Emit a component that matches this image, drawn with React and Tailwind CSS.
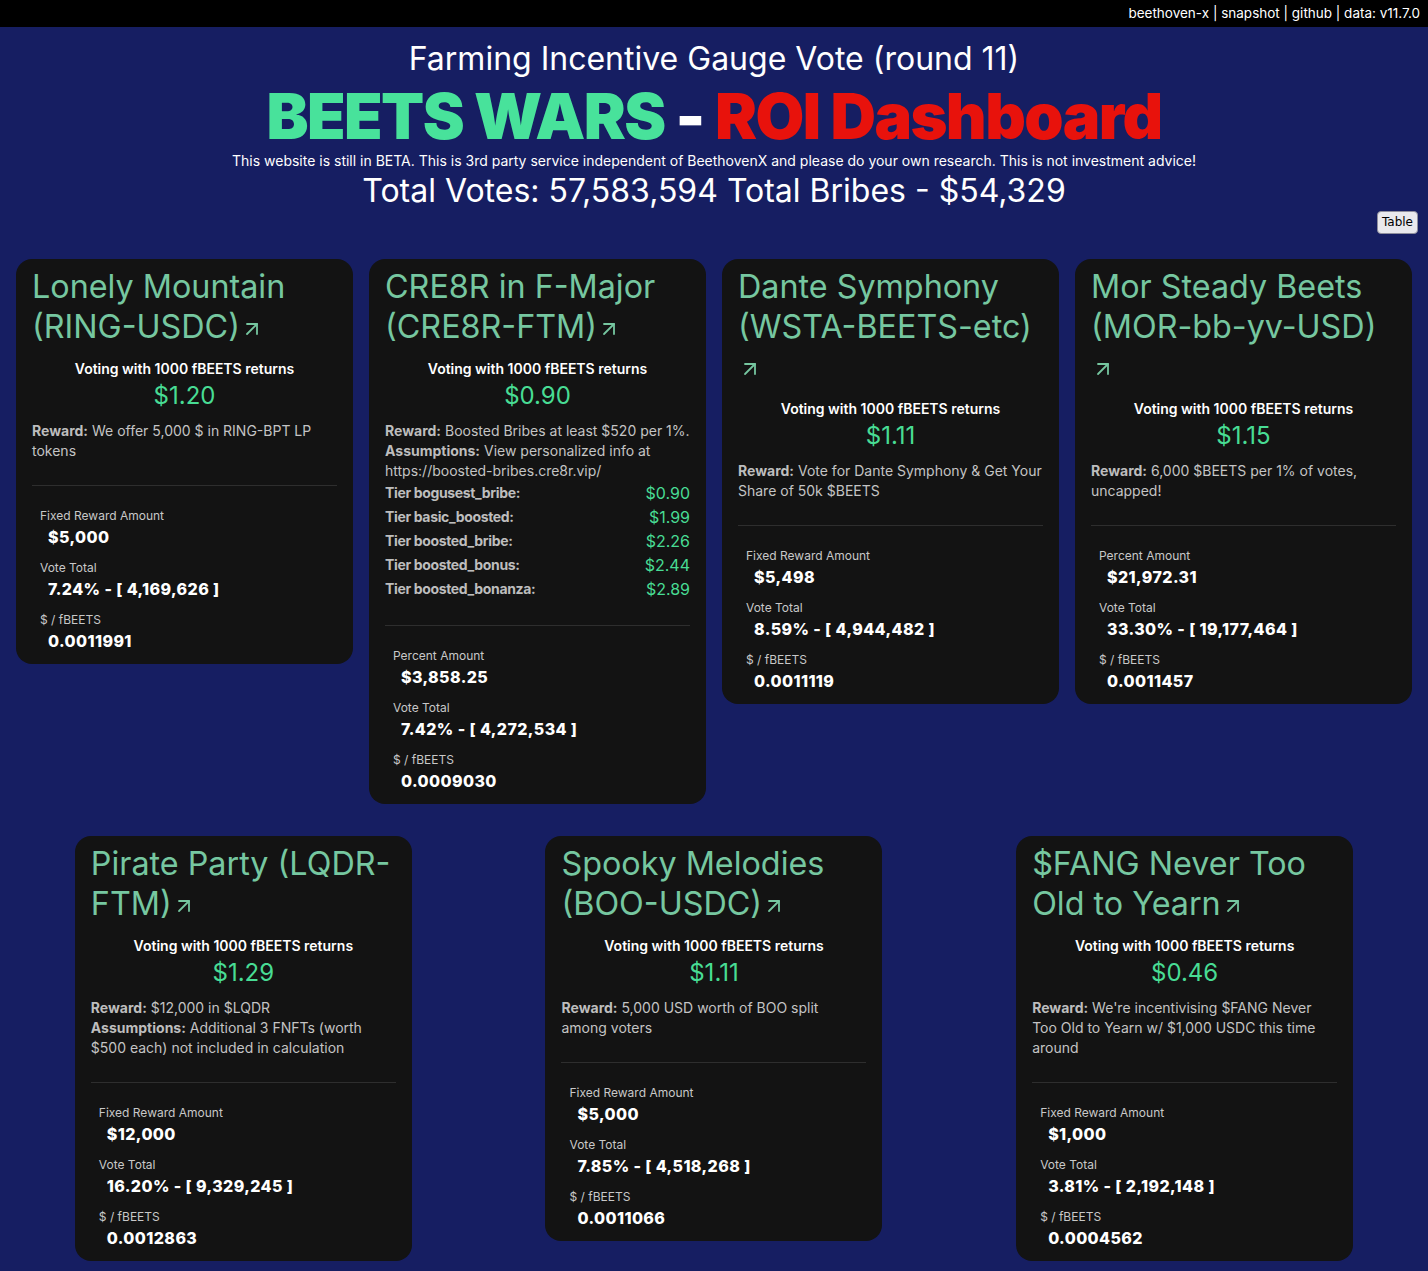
import React from 'react';
import { ArrowUpRight } from 'lucide-react';

const gauges = [
    {
        name: 'Lonely Mountain (RING-USDC)',
        returns: '$1.20',
        lines: [{ label: 'Reward:', text: 'We offer 5,000 $ in RING-BPT LP tokens' }],
        stats: [
            ['Fixed Reward Amount', '$5,000'],
            ['Vote Total', '7.24% - [ 4,169,626 ]'],
            ['$ / fBEETS', '0.0011991'],
        ],
    },
    {
        name: 'CRE8R in F-Major (CRE8R-FTM)',
        returns: '$0.90',
        lines: [
            { label: 'Reward:', text: 'Boosted Bribes at least $520 per 1%.' },
            { label: 'Assumptions:', text: 'View personalized info at https://boosted-bribes.cre8r.vip/' },
        ],
        tiers: [
            ['bogusest_bribe', '$0.90'],
            ['basic_boosted', '$1.99'],
            ['boosted_bribe', '$2.26'],
            ['boosted_bonus', '$2.44'],
            ['boosted_bonanza', '$2.89'],
        ],
        stats: [
            ['Percent Amount', '$3,858.25'],
            ['Vote Total', '7.42% - [ 4,272,534 ]'],
            ['$ / fBEETS', '0.0009030'],
        ],
    },
    {
        name: 'Dante Symphony (WSTA-BEETS-etc)',
        returns: '$1.11',
        lines: [{ label: 'Reward:', text: 'Vote for Dante Symphony & Get Your Share of 50k $BEETS' }],
        stats: [
            ['Fixed Reward Amount', '$5,498'],
            ['Vote Total', '8.59% - [ 4,944,482 ]'],
            ['$ / fBEETS', '0.0011119'],
        ],
    },
    {
        name: 'Mor Steady Beets (MOR-bb-yv-USD)',
        returns: '$1.15',
        lines: [{ label: 'Reward:', text: '6,000 $BEETS per 1% of votes, uncapped!' }],
        stats: [
            ['Percent Amount', '$21,972.31'],
            ['Vote Total', '33.30% - [ 19,177,464 ]'],
            ['$ / fBEETS', '0.0011457'],
        ],
    },
    {
        name: 'Pirate Party (LQDR-FTM)',
        returns: '$1.29',
        lines: [
            { label: 'Reward:', text: '$12,000 in $LQDR' },
            { label: 'Assumptions:', text: 'Additional 3 FNFTs (worth $500 each) not included in calculation' },
        ],
        stats: [
            ['Fixed Reward Amount', '$12,000'],
            ['Vote Total', '16.20% - [ 9,329,245 ]'],
            ['$ / fBEETS', '0.0012863'],
        ],
    },
    {
        name: 'Spooky Melodies (BOO-USDC)',
        returns: '$1.11',
        lines: [{ label: 'Reward:', text: '5,000 USD worth of BOO split among voters' }],
        stats: [
            ['Fixed Reward Amount', '$5,000'],
            ['Vote Total', '7.85% - [ 4,518,268 ]'],
            ['$ / fBEETS', '0.0011066'],
        ],
    },
    {
        name: '$FANG Never Too Old to Yearn',
        returns: '$0.46',
        lines: [{ label: 'Reward:', text: "We're incentivising $FANG Never Too Old to Yearn w/ $1,000 USDC this time around" }],
        stats: [
            ['Fixed Reward Amount', '$1,000'],
            ['Vote Total', '3.81% - [ 2,192,148 ]'],
            ['$ / fBEETS', '0.0004562'],
        ],
    },
];

const GaugeCard = ({ gauge }) => (
    <div className="w-[337px] mx-2 my-4 bg-[#131313] rounded-2xl px-4 pt-[8px] pb-[11px]">
        <h2 className="text-[32.3px] leading-[40px] text-[#76c7a0] font-normal">
            {gauge.name}
            <ArrowUpRight className="inline-block align-[-3px]" size={24} strokeWidth={1.8} />
        </h2>
        <div className="text-center mt-[11px]">
            <p className="text-[14px] leading-[22px] font-semibold text-white">Voting with 1000 fBEETS returns</p>
            <p className="text-[24px] leading-[32px] text-[#48dc94]">{gauge.returns}</p>
        </div>
        <div className="mt-[9px] text-[14px] leading-[20px] text-[#c4c4c4]">
            {gauge.lines.map((l) => (
                <p key={l.label}>
                    <span className="font-bold text-[#bdbdbd]">{l.label}</span> {l.text}
                </p>
            ))}
            {gauge.tiers && (
                <div>
                    {gauge.tiers.map(([tier, val]) => (
                        <div key={tier} className="flex justify-between leading-[24px]">
                            <span className="font-bold text-[#bdbdbd] tracking-tight">Tier {tier}:</span>
                            <span className="text-[16px] text-[#48dc94]">{val}</span>
                        </div>
                    ))}
                </div>
            )}
        </div>
        <div className="border-t border-[#2e2e2e] mt-6 mb-[21px]" />
        <div className="pl-2 flex flex-col gap-[10px]">
            {gauge.stats.map(([label, value]) => (
                <div key={label}>
                    <p className="text-[12px] leading-[18px] text-[#c8c8c8]">{label}</p>
                    <p className="pl-2 text-[16px] leading-[24px] font-extrabold tracking-wide text-white">{value}</p>
                </div>
            ))}
        </div>
    </div>
);

const App = () => {
    return (
        <div className="min-h-screen bg-[#161e62] font-[Inter,sans-serif] text-white pb-2">
            <div className="h-[27px] bg-black flex items-center justify-end pr-2 text-[13.5px]">
                beethoven-x | snapshot | github | data: v11.7.0
            </div>

            <div className="text-center">
                <h3 className="mt-[12px] text-[32px] leading-[40px] font-normal">Farming Incentive Gauge Vote (round 11)</h3>
                <h1 className="mt-[2px] text-[63px] leading-[70px] font-black tracking-tight">
                    <span className="text-[#48e29b]">BEETS WARS</span>
                    <span className="text-white"> - </span>
                    <span className="text-[#e8120c]">ROI Dashboard</span>
                </h1>
                <p className="text-[14px] leading-[20px]">
                    This website is still in BETA. This is 3rd party service independent of BeethovenX and please do your own research. This is not investment advice!
                </p>
                <p className="text-[32px] leading-[40px]">Total Votes: 57,583,594 Total Bribes - $54,329</p>
            </div>

            <div className="flex justify-end pr-[10px]">
                <button className="bg-[#e9e9ed] text-black text-[12px] leading-[15px] px-[4px] py-[3px] rounded border border-[#8f8f9d] font-['DejaVu_Sans',sans-serif]">
                    Table
                </button>
            </div>

            <div className="flex flex-wrap justify-around items-start px-2 mt-[9px]">
                {gauges.map((g) => (
                    <GaugeCard key={g.name} gauge={g} />
                ))}
            </div>
        </div>
    );
};

export default App;
